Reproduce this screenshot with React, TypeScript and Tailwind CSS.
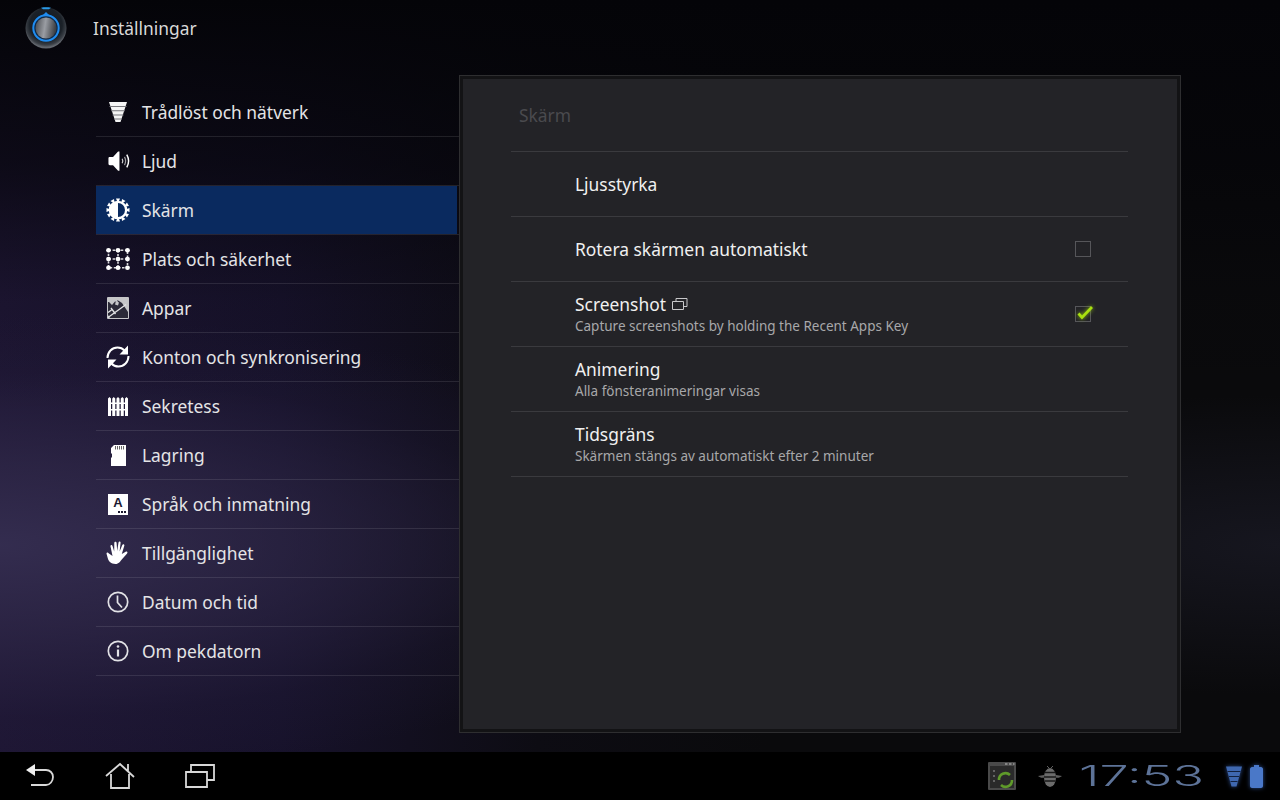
import type { ReactNode } from 'react';

const W = 'white';

function WifiIcon() {
  return (
    <svg width="20" height="22" viewBox="0 0 20 22">
      <path d="M1 1h18l-6.500 20h-5z" fill="#f4f4f4" />
      <path d="M1.500 5.500h17M3 9.800h14M4.500 14h11M6 18h8" stroke="#77777c" strokeWidth="1.100" />
    </svg>
  );
}

function SoundIcon() {
  return (
    <svg className="ml-[2px]" width="24" height="26" viewBox="0 0 24 26" fill="none">
      <path d="M0.500 10c0-1 .5-1.500 1.500-1.500h3.500L11 2.500h1.500v21H11l-5.500-6H2c-1 0-1.500-.5-1.500-1.500z" fill={W} />
      <path d="M15.500 10.500c.8 1.500.8 3.500 0 5" stroke={W} strokeWidth="1.300" opacity=".8" />
      <path d="M18 8.500c1.500 2.800 1.500 6.200 0 9" stroke={W} strokeWidth="1.300" opacity=".6" />
      <path d="M20.500 6c2.500 4.500 2.500 9.500 0 14" stroke={W} strokeWidth="1.600" />
    </svg>
  );
}

function BrightIcon() {
  return (
    <svg width="24" height="24" viewBox="0 0 24 24">
      <g fill={W}>
        {[0, 30, 60, 90, 120, 150, 180, 210, 240, 270, 300, 330].map((a) => (
          <path key={a} d="M10 0.500h4l-2 5z" transform={`rotate(${a} 12 12)`} />
        ))}
        <circle cx="12" cy="12" r="9.300" />
      </g>
      <path d="M12 5a7 7 0 0 1 0 14z" fill="#0a2a5f" />
    </svg>
  );
}

function DotsIcon() {
  const pts = [2.500, 12, 21.500];
  return (
    <svg width="24" height="22" viewBox="0 0 24 24" fill="none" preserveAspectRatio="none">
      <path d="M2.500 2.500h19v19h-19zM2.500 12h19M12 2.500v19" stroke={W} strokeWidth="1.600" strokeDasharray="2.500 1.600" opacity=".85" />
      {pts.map((x) =>
        pts.map((y) => <circle key={`${x}-${y}`} cx={x} cy={y} r="2.400" fill={W} />),
      )}
    </svg>
  );
}

function AppsIcon() {
  return (
    <svg width="22" height="22" viewBox="0 0 22 22">
      <rect width="22" height="22" rx="1" fill="#c6c6c8" />
      <path d="M1 5h1l3 3 3-3.500 3 .5-1-2 2 1 3 2 2 3 4 6v6H3l-2-3z" fill="#2c2a38" />
      <path d="M1 20.500L19 7.500M4 11l4.500 6M1 15.500l3.500-2.500" stroke="#e4e4e6" strokeWidth="1.300" fill="none" />
      <path d="M9 4l3 1.500-1 3-3-1z" fill="#c6c6c8" />
    </svg>
  );
}

function SyncIcon() {
  return (
    <svg width="24" height="24" viewBox="0 0 24 24" fill="none">
      <path d="M1.500 13C1.500 7 6 2.500 11.500 2.500c3 0 5.300 1 7 3" stroke={W} strokeWidth="2" />
      <path d="M22 .5v9h-8.500z" fill={W} />
      <path d="M22.500 11c0 6-4.500 10.500-10 10.500-3 0-5.300-1-7-3" stroke={W} strokeWidth="2" />
      <path d="M2 23.500v-9h8.500z" fill={W} />
    </svg>
  );
}

function FenceIcon() {
  return (
    <svg width="20" height="19" viewBox="0 0 20 19">
      <g fill={W}>
        <path d="M0 1.500l1.500-1.500L3 1.500V19H0zM4.250 1.500l1.500-1.500 1.500 1.500V19h-3zM8.500 1.500l1.500-1.500 1.500 1.500V19h-3zM12.750 1.500l1.500-1.500 1.500 1.500V19h-3zM17 1.500l1.500-1.500L20 1.500V19h-3z" />
        <rect y="5.500" width="20" height="1.500" />
        <rect y="12" width="20" height="1.500" />
      </g>
    </svg>
  );
}

function SdIcon() {
  return (
    <svg width="15" height="21" viewBox="0 0 15 21">
      <path d="M3 0h12v21H0v-8l1-1v-3L0 8V3z" fill={W} />
      <path d="M4.500 1v3.500M6.500 1v3.500M8.500 1v3.500M10.500 1v3.500M12.500 1v3.500" stroke="#666" strokeWidth="1" />
    </svg>
  );
}

function LangIcon() {
  return (
    <div className="relative flex h-[21px] w-5 items-center justify-center bg-white font-['Liberation_Sans',sans-serif] text-[13px] leading-none font-bold text-[#1b1930]">
      <span className="mb-1">A</span>
      <span className="absolute right-[2px] bottom-[2px] flex gap-[1px]">
        <i className="h-[2px] w-[2px] bg-[#1b1930]" />
        <i className="h-[2px] w-[2px] bg-[#1b1930]" />
        <i className="h-[2px] w-[2px] bg-[#1b1930]" />
      </span>
    </div>
  );
}

function HandIcon() {
  return (
    <svg width="24" height="24" viewBox="0 0 24 24">
      <path
        d="M6.500 15L4.500 5.500c-.3-1.500 1.600-2 2-.5l1.700 5.500L8.300 2c0-1.700 2.200-1.700 2.300 0l.6 8 1.300-8.500c.3-1.600 2.300-1.300 2.100.3L13.600 10.500l2.700-6.500c.6-1.400 2.500-.7 2 .8l-2.500 8.200 3.800-2.200c1.500-.8 2.600.8 1.300 1.900l-4.900 5.500c-1.700 2-3.300 4.800-6.500 4.800C5 23 2.700 20.500 1.800 17.300L.6 13c-.4-1.500 1.400-2 2-.7z"
        fill={W}
      />
    </svg>
  );
}

function ClockIcon() {
  return (
    <svg width="22" height="22" viewBox="0 0 22 22" fill="none" stroke="#e2e2e6">
      <circle cx="11" cy="11" r="9.700" strokeWidth="1.700" />
      <path d="M10.500 4.500V11.500l4.500 5" strokeWidth="1.700" />
    </svg>
  );
}

function InfoIcon() {
  return (
    <svg width="22" height="22" viewBox="0 0 22 22" fill="none">
      <circle cx="11" cy="11" r="9.700" stroke="#e2e2e6" strokeWidth="1.700" />
      <circle cx="11" cy="6.500" r="1.300" fill="#e2e2e6" />
      <path d="M11 9.500v7" stroke="#e2e2e6" strokeWidth="2.200" />
    </svg>
  );
}

function BeeIcon() {
  return (
    <svg className="ml-[22px]" width="24" height="24" viewBox="0 0 24 24">
      <path d="M9 2l2 2M15 2l-2 2" stroke="#5e5e5e" strokeWidth="1" />
      <path d="M6 11L0 12c2 1.800 4 2 6.500 1.500zM18 11l6 1c-2 1.800-4 2-6.500 1.500z" fill="#5e5e5e" />
      <ellipse cx="12" cy="13.500" rx="6" ry="9.500" fill="#6c6c6c" />
      <path d="M6.500 8.500h11M6 13h12M6.500 17h11" stroke="#181818" strokeWidth="1.400" />
    </svg>
  );
}

function AppLogo() {
  return (
    <svg width="42" height="44" viewBox="0 0 42 44">
      <defs>
        <radialGradient id="ring" cx="50%" cy="42%" r="55%">
          <stop offset="0%" stopColor="#10161f" />
          <stop offset="72%" stopColor="#1b2128" />
          <stop offset="90%" stopColor="#3a3f46" />
          <stop offset="100%" stopColor="#62666d" />
        </radialGradient>
        <linearGradient id="knob" x1="0" y1="0" x2="1" y2="0.150">
          <stop offset="0%" stopColor="#45484d" />
          <stop offset="50%" stopColor="#9a9da3" />
          <stop offset="100%" stopColor="#3e4146" />
        </linearGradient>
      </defs>
      <circle cx="21" cy="22" r="20.500" fill="url(#ring)" />
      <path d="M16 1.800c3-.6 7-.6 10 0l-2 1.400h-6z" fill="#2a9ae8" />
      <circle cx="21" cy="22" r="12.700" fill="#102a48" stroke="#1f8cf0" strokeWidth="2" />
      <path d="M17 10L21 6l4 4z" fill="#1f8cf0" />
      <circle cx="21" cy="22" r="10.500" fill="url(#knob)" />
    </svg>
  );
}

const items: { label: string; icon: ReactNode }[] = [
  { label: 'Trådlöst och nätverk', icon: <WifiIcon /> },
  { label: 'Ljud', icon: <SoundIcon /> },
  { label: 'Skärm', icon: <BrightIcon /> },
  { label: 'Plats och säkerhet', icon: <DotsIcon /> },
  { label: 'Appar', icon: <AppsIcon /> },
  { label: 'Konton och synkronisering', icon: <SyncIcon /> },
  { label: 'Sekretess', icon: <FenceIcon /> },
  { label: 'Lagring', icon: <SdIcon /> },
  { label: 'Språk och inmatning', icon: <LangIcon /> },
  { label: 'Tillgänglighet', icon: <HandIcon /> },
  { label: 'Datum och tid', icon: <ClockIcon /> },
  { label: 'Om pekdatorn', icon: <InfoIcon /> },
];

function SettingRow({ title, sub, extra, right }: { title: string; sub?: string; extra?: ReactNode; right?: ReactNode }) {
  return (
    <div className="flex h-[65px] items-center justify-between border-b border-[#3a3a3e] pr-[37px] pl-[64px]">
      <div>
        <div
          className={`flex items-center gap-[6px] text-[17.4px] leading-[24px] text-[#f0f0f0] ${sub ? '-translate-y-px' : ''}`}
        >
          {title}
          {extra}
        </div>
        {sub && <div className="text-[13.5px] leading-[18px] text-[#a8a8aa]">{sub}</div>}
      </div>
      {right}
    </div>
  );
}

function CheckBox({ checked }: { checked?: boolean }) {
  return (
    <div className="relative h-4 w-4 border border-[#56565a]">
      {checked && (
        <svg
          className="absolute -top-[3px] -right-[4px] drop-shadow-[0_0_2px_#8fc010]"
          width="19"
          height="18"
          viewBox="0 0 19 18"
          fill="none"
        >
          <path d="M3.500 9.500l3.500 4L17 3" stroke="#a8e010" strokeWidth="2.700" />
        </svg>
      )}
    </div>
  );
}

export default function App() {
  return (
    <div className="flex h-[800px] w-[1280px] flex-col overflow-hidden font-['Noto_Sans',sans-serif]">
      <div className="flex flex-1 flex-col bg-[#0a0a0c] bg-[linear-gradient(180deg,#040408_0%,rgba(4,4,8,0.65)_22%,rgba(4,4,8,0.12)_40%,rgba(4,4,8,0)_55%),radial-gradient(ellipse_720px_230px_at_0px_545px,rgba(54,47,82,0.9)_0%,rgba(50,43,76,0.65)_35%,rgba(36,30,60,0.25)_75%,rgba(20,18,40,0)_100%),radial-gradient(ellipse_520px_150px_at_1280px_545px,#16161f_0%,rgba(22,22,31,0)_100%),linear-gradient(90deg,#1e1634_0%,#17122b_22%,#0d0c13_42%,#0a0a0c_60%,#0a0a0c_100%)]">
        <header className="flex h-[56px] items-center pl-[25px]">
          <AppLogo />
          <h1 className="ml-[26px] text-[17.4px] font-normal text-[#d8d8d8]">Inställningar</h1>
        </header>
        <div className="flex pr-[99px] pl-[96px]">
          <nav className="w-[363px] pt-[32px]">
            {items.map((it) => (
              <div
                key={it.label}
                className="flex h-[49px] items-center border-b border-white/10 text-[17.4px] text-[#e4e4e6]"
              >
                <div
                  className={`flex h-[48px] w-[361px] items-center ${it.label === 'Skärm' ? 'bg-[#0a2a5f]' : ''}`}
                >
                  <div className="ml-[10px] flex w-[24px] items-center justify-center">{it.icon}</div>
                  <span className="ml-[12px]">{it.label}</span>
                </div>
              </div>
            ))}
          </nav>
          <div className="mt-[19px] h-[658px] w-[722px] border border-[#2e2e30] bg-[#131315] p-[3px]">
            <div className="h-full bg-[#232327] pr-[49px] pl-[48px]">
              <div className="flex h-[73px] items-center border-b border-[#3a3a3e] pl-2 text-[17.4px] text-[#4a4a4e]">
                Skärm
              </div>
              <SettingRow title="Ljusstyrka" />
              <SettingRow title="Rotera skärmen automatiskt" right={<CheckBox />} />
              <SettingRow
                title="Screenshot"
                sub="Capture screenshots by holding the Recent Apps Key"
                extra={
                  <svg width="16" height="12" viewBox="0 0 16 12" fill="none" stroke="#c8c8ca">
                    <path d="M.5 3.500h11v8H.5zM4 3.500V.5h11v8h-3.500" />
                  </svg>
                }
                right={<CheckBox checked />}
              />
              <SettingRow title="Animering" sub="Alla fönsteranimeringar visas" />
              <SettingRow title="Tidsgräns" sub="Skärmen stängs av automatiskt efter 2 minuter" />
            </div>
          </div>
        </div>
      </div>
      <footer className="flex h-[48px] items-center justify-between bg-black pr-[17px] pl-[25px]">
        <div className="flex items-center gap-[50px]">
          <svg width="30" height="26" viewBox="0 0 30 26" fill="none">
            <path d="M9 7h12c4 0 7 3 7 7s-3 8-7 8H6" stroke="#d8d8d8" strokeWidth="1.800" />
            <path d="M10 1v12L1 7z" fill="#f0f0f0" />
          </svg>
          <svg width="30" height="28" viewBox="0 0 30 28" fill="none" stroke="#d8d8d8" strokeWidth="1.800">
            <path d="M1 14L15 2l14 13M6 12v14h18V12M23 2v7" />
          </svg>
          <svg width="30" height="26" viewBox="0 0 30 26" fill="none" stroke="#d8d8d8" strokeWidth="1.800">
            <path d="M1 9h21v15H1zM6 9V2h23v15h-7" />
          </svg>
        </div>
        <div className="flex items-center">
          <svg width="28" height="28" viewBox="0 0 28 28">
            <rect width="28" height="28" rx="1" fill="#4a4a4a" />
            <rect x="2" y="4" width="24" height="22" fill="#2a2a2a" />
            <path d="M17 2h2.500M21 2h2.500M25 2h1.500" stroke="#999" strokeWidth="1.500" />
            <path d="M5 9h2M5 14h2M5 19h2" stroke="#777" strokeWidth="1.500" />
            <path d="M11 18a6.500 6.500 0 0 1 11-5M24 18a6.500 6.500 0 0 1-11 5" stroke="#5f9a2a" strokeWidth="2.600" fill="none" />
          </svg>
          <BeeIcon />
          <span className="ml-[17px] inline-block w-[121px] origin-left scale-x-[1.86] font-['Inter',sans-serif] text-[28px] leading-none font-light text-[#5d7398]">
            17:53
          </span>
          <svg className="ml-[26px] drop-shadow-[0_0_2px_#2a4a88]" width="16" height="21" viewBox="0 0 16 21">
            <path d="M0 .5h16L10.500 20.500h-5z" fill="#3f68b0" />
            <path d="M1.500 5.500h13M3 10.500h10M4.500 15.500h7" stroke="#12213f" strokeWidth="1" />
          </svg>
          <svg className="ml-[8px] drop-shadow-[0_0_2px_#2a4a88]" width="13" height="23" viewBox="0 0 13 23">
            <path d="M4 0h5v2h2c1 0 2 1 2 2v17c0 1-1 2-2 2H2c-1 0-2-1-2-2V4c0-1 1-2 2-2h2z" fill="#4a78c8" />
          </svg>
        </div>
      </footer>
    </div>
  );
}
